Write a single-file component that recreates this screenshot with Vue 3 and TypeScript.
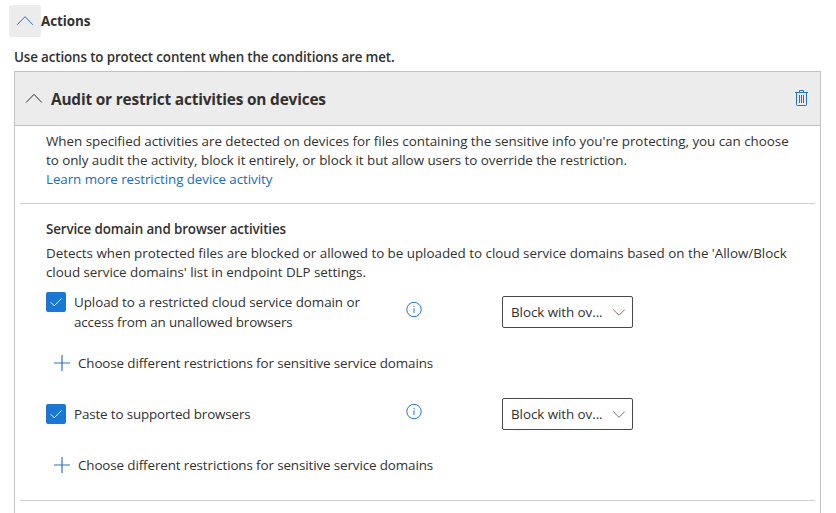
<script setup lang="ts">
interface Activity {
  id: string
  lines: string[]
  checked: boolean
  action: string
}

const activities: Activity[] = [
  {
    id: 'upload',
    lines: ['Upload to a restricted cloud service domain or', 'access from an unallowed browsers'],
    checked: true,
    action: 'Block with ov...',
  },
  {
    id: 'paste',
    lines: ['Paste to supported browsers'],
    checked: true,
    action: 'Block with ov...',
  },
]
</script>

<template>
  <main class="page">
    <header class="section-head">
      <button class="collapse" aria-label="Collapse">
        <svg width="18" height="12" viewBox="0 0 18 12"><path d="M1.1 9.8 9 1.7 16.9 9.8" /></svg>
      </button>
      <h2>Actions</h2>
    </header>
    <p class="intro">Use actions to protect content when the conditions are met.</p>

    <section class="panel">
      <header class="panel-head">
        <svg class="caret" width="18" height="12" viewBox="0 0 18 12"><path d="M1.1 9.5 9 1.4 16.9 9.5" /></svg>
        <h3>Audit or restrict activities on devices</h3>
        <svg class="trash" width="14" height="17" viewBox="0 0 14 17">
          <path d="M1 2.5h13M5.5 2.5v-2h4v2M2.5 2.5v12.2q0 .8.8.8h8.4q.8 0 .8-.8V2.5M5.5 5v8M7.5 5v8M9.5 5v8" />
        </svg>
      </header>

      <div class="summary">
        <p class="s1">When specified activities are detected on devices for files containing the sensitive info you're protecting, you can choose</p>
        <p class="s2">to only audit the activity, block it entirely, or block it but allow users to override the restriction.</p>
        <a class="s3">Learn more restricting device activity</a>
      </div>

      <div class="group">
        <h4>Service domain and browser activities</h4>
        <div class="desc">
          <p class="s4">Detects when protected files are blocked or allowed to be uploaded to cloud service domains based on the 'Allow/Block</p>
          <p class="s5">cloud service domains' list in endpoint DLP settings.</p>
        </div>

        <div v-for="item in activities" :key="item.id" class="activity" :class="item.id">
          <div class="row">
            <span class="check" role="checkbox" :aria-checked="item.checked">
              <svg v-if="item.checked" width="20" height="20" viewBox="0 0 20 20"><path d="M4.8 10.3 8.3 13.8 15.6 6.4" /></svg>
            </span>
            <div class="label">
              <p v-for="line in item.lines" :key="line">{{ line }}</p>
            </div>
            <svg class="info" width="16" height="16" viewBox="0 0 16 16">
              <circle cx="8" cy="7.5" r="7.2" />
              <path d="M8 6.3v4.7M8 3.8v1.3" />
            </svg>
            <button class="select">
              <span>{{ item.action }}</span>
              <svg width="14" height="9" viewBox="0 0 14 9"><path d="M1.2 1.5 7 7.3 12.8 1.5" /></svg>
            </button>
          </div>
          <div class="add">
            <svg width="16" height="16" viewBox="0 0 16 16"><path d="M8 0v16M0 8h16" /></svg>
            <span>Choose different restrictions for sensitive service domains</span>
          </div>
        </div>
      </div>
    </section>
  </main>
</template>

<style>
body {
  margin: 0;
  background: #fff;
  overflow: hidden;
}
</style>

<style scoped>
.page {
  box-sizing: border-box;
  width: 836px;
  height: 513px;
  padding: 5px 15px 0 9px;
  overflow: hidden;
  display: flex;
  flex-direction: column;
  color: #323130;
  font: 13.4px/19px "Open Sans", "Noto Sans", sans-serif;
  white-space: nowrap;
}
h2, h3, h4, p { margin: 0; }
svg { display: block; fill: none; flex: none; }
button { font: inherit; color: inherit; padding: 0; }
.section-head { display: flex; flex: none; align-items: center; height: 32px; }
.collapse {
  display: flex;
  align-items: center;
  justify-content: center;
  width: 32px;
  height: 32px;
  border: 0;
  border-radius: 2px;
  background: #ececec;
  stroke: #2b6fc4;
}
h2 { font-size: 13.4px; font-weight: 700; line-height: 20px; letter-spacing: -0.08px; }
.intro { margin: 10px 0 0 5px; height: 24px; flex: none; line-height: 20px; font-weight: 600; letter-spacing: -0.135px; }
.panel {
  box-sizing: border-box;
  width: 807px;
  height: 460px;
  flex: none;
  margin-left: 5px;
  border: 1px solid #c3c3c3;
}
.panel-head {
  box-sizing: border-box;
  display: flex;
  align-items: center;
  height: 54px;
  padding: 0 12px 0 10px;
  background: #ececec;
  border-bottom: 1px solid #c3c3c3;
}
.caret { stroke: #323130; }
h3 { margin: 3px 0 0 8px; font-size: 15.4px; line-height: 22px; font-weight: 700; letter-spacing: -0.18px; }
.trash { margin-left: auto; stroke: #2272c7; }
.summary {
  box-sizing: border-box;
  height: 78px;
  margin: 0 5px;
  padding: 6px 0 0 26px;
  border-bottom: 1px solid #cfcfcf;
}
.summary a { display: block; color: #1a6cbd; }
.s1 { letter-spacing: -0.03px; }
.s2 { letter-spacing: -0.04px; }
.s3 { letter-spacing: -0.08px; }
.s4 { letter-spacing: -0.02px; }
.s5 { letter-spacing: -0.04px; }
.group {
  box-sizing: border-box;
  height: 297px;
  margin: 0 5px;
  padding: 16px 0 0 26px;
  border-bottom: 1px solid #cfcfcf;
}
h4 { font-size: 13.4px; line-height: 19px; font-weight: 600; letter-spacing: -0.13px; }
.desc { margin-top: 5px; }
.activity { height: 102px; }
.upload { padding-top: 6px; }
.row { display: flex; align-items: flex-start; height: 59px; }
.check {
  width: 20px;
  height: 20px;
  margin-top: 4px;
  flex: none;
  border-radius: 2px;
  background: #1a78d3;
  stroke: #fff;
}
.label { width: 332px; margin-left: 8px; padding-top: 4px; line-height: 20px; flex: none; letter-spacing: -0.14px; }
.upload .label p:first-child { letter-spacing: -0.055px; }
.info { margin-top: 14px; stroke: #2272c7; }
.select {
  box-sizing: border-box;
  display: flex;
  align-items: center;
  justify-content: space-between;
  width: 131px;
  height: 32px;
  margin: 8px 0 0 80px;
  padding: 0 6px 0 8px;
  border: 1px solid #4a4846;
  border-radius: 2px;
  background: #fff;
  letter-spacing: -0.06px;
}
.select svg { stroke: #8a6f68; }
.paste .check { margin-top: 14px; }
.paste .label { padding-top: 14px; }
.paste .info { margin-top: 14px; }
.paste .select { margin-top: 8px; }
.add { display: flex; align-items: center; height: 32px; padding-left: 8px; gap: 8px; letter-spacing: -0.11px; }
.add svg { stroke: #2f74c8; stroke-width: 1.2; }
</style>
